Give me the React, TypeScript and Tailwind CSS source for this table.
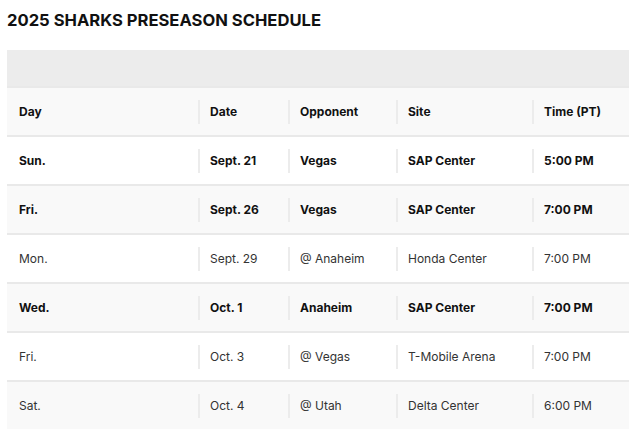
import React from "react";

type Row = { day: string; date: string; opp: string; site: string; time: string; bold: boolean };

const rows: Row[] = [
  { day: "Sun.", date: "Sept. 21", opp: "Vegas", site: "SAP Center", time: "5:00 PM", bold: true },
  { day: "Fri.", date: "Sept. 26", opp: "Vegas", site: "SAP Center", time: "7:00 PM", bold: true },
  { day: "Mon.", date: "Sept. 29", opp: "@ Anaheim", site: "Honda Center", time: "7:00 PM", bold: false },
  { day: "Wed.", date: "Oct. 1", opp: "Anaheim", site: "SAP Center", time: "7:00 PM", bold: true },
  { day: "Fri.", date: "Oct. 3", opp: "@ Vegas", site: "T-Mobile Arena", time: "7:00 PM", bold: false },
  { day: "Sat.", date: "Oct. 4", opp: "@ Utah", site: "Delta Center", time: "6:00 PM", bold: false },
];

function Cell({ children, first }: { children: React.ReactNode; first?: boolean }) {
  if (first) {
    return <div className="flex items-center pl-3">{children}</div>;
  }
  return (
    <div className="flex items-center">
      <div className="flex h-6 items-center border-l-2 border-[#ececec] pl-[10px]">{children}</div>
    </div>
  );
}

function TableRow({ cells, bg, bold }: { cells: string[]; bg: string; bold: boolean }) {
  return (
    <div
      className={`grid h-[49px] grid-cols-[191px_90px_108px_136px_1fr] border-t-2 border-[#e9e9e9] text-[12px] ${bg} ${
        bold ? "font-bold text-[#111111]" : "font-normal text-[#333333]"
      }`}
    >
      {cells.map((c, i) => (
        <Cell key={i} first={i === 0}>
          {c}
        </Cell>
      ))}
    </div>
  );
}

export default function App() {
  return (
    <div className="min-h-[431px] bg-white pl-[7px] pr-[3px] font-['Inter','Noto_Sans',sans-serif]">
      <h1 className="pt-[8px] text-[16.6px] font-bold leading-[24px] text-[#111111]">2025 SHARKS PRESEASON SCHEDULE</h1>
      <div className="mt-[18px] h-[36px] bg-[#ececec]" />
      <TableRow cells={["Day", "Date", "Opponent", "Site", "Time (PT)"]} bg="bg-[#f9f9f9]" bold />
      {rows.map((r, i) => (
        <TableRow
          key={i}
          cells={[r.day, r.date, r.opp, r.site, r.time]}
          bg={i % 2 === 0 ? "bg-white" : "bg-[#f9f9f9]"}
          bold={r.bold}
        />
      ))}
    </div>
  );
}
